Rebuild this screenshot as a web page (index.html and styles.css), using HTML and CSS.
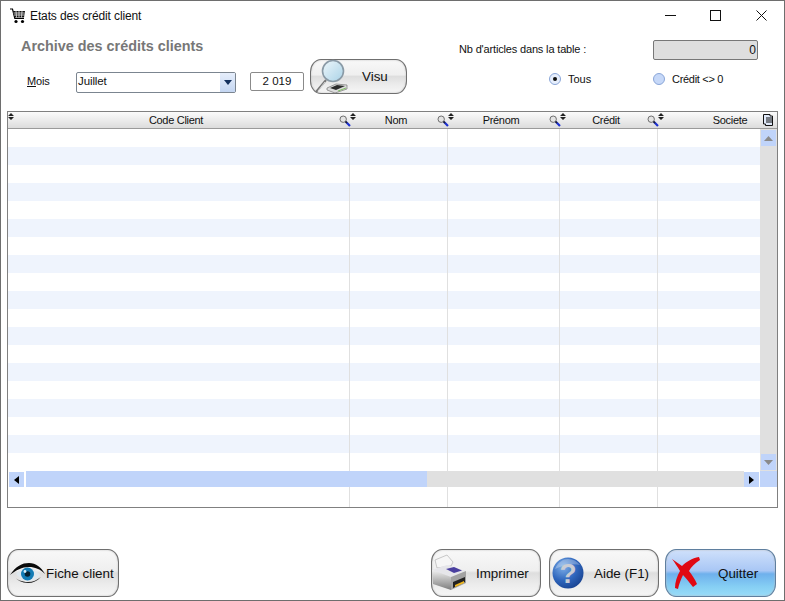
FILE: index.html
```html
<!DOCTYPE html>
<html lang="fr">
<head>
<meta charset="utf-8">
<title>Etats des crédit client</title>
<link rel="stylesheet" href="styles.css">
</head>
<body>
<svg class="defs" width="0" height="0" aria-hidden="true">
  <defs>
    <symbol id="sort" viewBox="0 0 6 7"><path d="M3 0 6 3H0Z M0 4H6L3 7Z" fill="#222"/></symbol>
    <symbol id="find" viewBox="0 0 12 12">
      <circle cx="4.2" cy="4.2" r="3.2" fill="#e4e4e4" stroke="#6e6e6e"/>
      <path d="M6.8 6.8 11 11" stroke="#1c2fd0" stroke-width="2.2"/>
      <path d="M6.5 6.5 8 8" stroke="#222" stroke-width="1.6"/>
    </symbol>
    <linearGradient id="lens" x1="0" y1="0" x2="1" y2="1"><stop offset="0" stop-color="#eef7fb"/><stop offset="1" stop-color="#a9d2e6"/></linearGradient>
    <radialGradient id="qball" cx=".35" cy=".3" r=".8"><stop offset="0" stop-color="#7fb0e8"/><stop offset=".55" stop-color="#2f66bd"/><stop offset="1" stop-color="#163f8c"/></radialGradient>
    <linearGradient id="printerbody" x1="0" y1="0" x2="0" y2="1"><stop offset="0" stop-color="#f0f0f0"/><stop offset="1" stop-color="#7d7d7d"/></linearGradient>
  </defs>
</svg>
<div class="window">
  <header class="titlebar">
    <svg class="cart" width="16" height="16" viewBox="0 0 16 16"><path d="M0 1h2.500l2.300 9.500H14" fill="none" stroke="#000" stroke-width="1.200"/><path d="M3 3h12l-1 6.500H4.500Z" fill="#111"/><path d="M3.500 5h11M4 7h10.500M6 3l.5 6.500M9 3v6.500M12 3l-.5 6.500" stroke="#fff" stroke-width=".7"/><circle cx="6" cy="13.500" r="1.600" fill="#000"/><circle cx="12.500" cy="13.500" r="1.600" fill="#000"/></svg>
    <span class="title">Etats des crédit client</span>
    <div class="controls">
      <span class="ctl"><svg width="11" height="11" viewBox="0 0 11 11"><path d="M0 5.500H11" stroke="#111"/></svg></span>
      <span class="ctl"><svg width="11" height="11" viewBox="0 0 11 11"><rect x=".5" y=".5" width="10" height="10" fill="none" stroke="#111"/></svg></span>
      <span class="ctl ctl-close"><svg width="11" height="11" viewBox="0 0 11 11"><path d="M.5.500 10.500 10.500M10.500.500 .5 10.500" stroke="#111"/></svg></span>
    </div>
  </header>

  <section class="top">
    <div class="top-left">
      <h1 class="heading">Archive des crédits clients</h1>
      <div class="filters">
        <label class="mois"><u>M</u>ois</label>
        <div class="select"><span class="select-value">Juillet</span><span class="select-btn"><svg width="8" height="5" viewBox="0 0 8 5"><path d="M0 0H8L4 5Z" fill="#14305e"/></svg></span></div>
        <div class="year">2 019</div>
        <button class="btn btn-visu" type="button">
          <svg width="46" height="36" viewBox="0 0 46 36"><path d="M13 21 3 33" stroke="#777" stroke-width="2"/><path d="M12 23 5 32" stroke="#eee" stroke-width=".8"/><circle cx="20" cy="12" r="10.500" fill="url(#lens)" stroke="#8a9aa6" stroke-width="1.600"/><path d="M14 29l9-4 11 1v4l-12 4-8-3Z" fill="#dcdcdc" stroke="#777" stroke-width=".7"/><path d="M17 29l7-3 8 1-9 4Z" fill="#2b2b2b"/><path d="M25 32l8-3" stroke="#7fbf60"/></svg>
          <span class="visu-label">Visu</span>
        </button>
      </div>
    </div>
    <div class="top-right">
      <div class="count-row">
        <span class="count-label">Nb d'articles dans la table :</span>
        <div class="count">0</div>
      </div>
      <div class="radios">
        <span class="radio radio-tous"><i class="dot on"></i>Tous</span>
        <span class="radio radio-credit"><i class="dot"></i>Crédit &lt;&gt; 0</span>
      </div>
    </div>
  </section>

  <section class="grid">
    <div class="head">
      <div class="hcell c1"><svg class="sort"><use href="#sort"/></svg><span class="hname">Code Client</span><svg class="find"><use href="#find"/></svg></div>
      <div class="hcell c2"><svg class="sort"><use href="#sort"/></svg><span class="hname">Nom</span><svg class="find"><use href="#find"/></svg></div>
      <div class="hcell c3"><svg class="sort"><use href="#sort"/></svg><span class="hname">Prénom</span><svg class="find"><use href="#find"/></svg></div>
      <div class="hcell c4"><svg class="sort"><use href="#sort"/></svg><span class="hname">Crédit</span><svg class="find"><use href="#find"/></svg></div>
      <div class="hcell c5"><svg class="sort"><use href="#sort"/></svg><span class="hname hname-last">Societe</span><svg class="cols" width="10" height="12" viewBox="0 0 10 12"><path d="M.5.500H7V2H9.500V11.500H2.500V10H.5Z" fill="#dfe8f8" stroke="#111"/><path d="M3 4H9M3 6H9M3 8H9" stroke="#111"/></svg></div>
    </div>
    <div class="body">
      <div class="rows" id="rows">
        <div class="row"><i class="c1"></i><i class="c2"></i><i class="c3"></i><i class="c4"></i><i class="c5"></i></div>
        <div class="row"><i class="c1"></i><i class="c2"></i><i class="c3"></i><i class="c4"></i><i class="c5"></i></div>
        <div class="row"><i class="c1"></i><i class="c2"></i><i class="c3"></i><i class="c4"></i><i class="c5"></i></div>
        <div class="row"><i class="c1"></i><i class="c2"></i><i class="c3"></i><i class="c4"></i><i class="c5"></i></div>
        <div class="row"><i class="c1"></i><i class="c2"></i><i class="c3"></i><i class="c4"></i><i class="c5"></i></div>
        <div class="row"><i class="c1"></i><i class="c2"></i><i class="c3"></i><i class="c4"></i><i class="c5"></i></div>
        <div class="row"><i class="c1"></i><i class="c2"></i><i class="c3"></i><i class="c4"></i><i class="c5"></i></div>
        <div class="row"><i class="c1"></i><i class="c2"></i><i class="c3"></i><i class="c4"></i><i class="c5"></i></div>
        <div class="row"><i class="c1"></i><i class="c2"></i><i class="c3"></i><i class="c4"></i><i class="c5"></i></div>
        <div class="row"><i class="c1"></i><i class="c2"></i><i class="c3"></i><i class="c4"></i><i class="c5"></i></div>
        <div class="row"><i class="c1"></i><i class="c2"></i><i class="c3"></i><i class="c4"></i><i class="c5"></i></div>
        <div class="row"><i class="c1"></i><i class="c2"></i><i class="c3"></i><i class="c4"></i><i class="c5"></i></div>
        <div class="row"><i class="c1"></i><i class="c2"></i><i class="c3"></i><i class="c4"></i><i class="c5"></i></div>
        <div class="row"><i class="c1"></i><i class="c2"></i><i class="c3"></i><i class="c4"></i><i class="c5"></i></div>
        <div class="row"><i class="c1"></i><i class="c2"></i><i class="c3"></i><i class="c4"></i><i class="c5"></i></div>
        <div class="row"><i class="c1"></i><i class="c2"></i><i class="c3"></i><i class="c4"></i><i class="c5"></i></div>
        <div class="row"><i class="c1"></i><i class="c2"></i><i class="c3"></i><i class="c4"></i><i class="c5"></i></div>
        <div class="row"><i class="c1"></i><i class="c2"></i><i class="c3"></i><i class="c4"></i><i class="c5"></i></div>
        <div class="row"><i class="c1"></i><i class="c2"></i><i class="c3"></i><i class="c4"></i><i class="c5"></i></div>
      </div>
      <div class="vscroll">
        <span class="sbtn"><svg width="9" height="5" viewBox="0 0 9 5"><path d="M4.500 0 9 5H0Z" fill="#8a8a8a"/></svg></span>
        <span class="vtrack"></span>
        <span class="sbtn"><svg width="9" height="5" viewBox="0 0 9 5"><path d="M0 0H9L4.500 5Z" fill="#8a8a8a"/></svg></span>
      </div>
    </div>
    <div class="hscroll">
      <span class="sbtn"><svg width="5" height="8" viewBox="0 0 5 8"><path d="M5 0V8L0 4Z" fill="#000"/></svg></span>
      <span class="hthumb"></span>
      <span class="htrack"></span>
      <span class="sbtn"><svg width="5" height="8" viewBox="0 0 5 8"><path d="M0 0V8L5 4Z" fill="#000"/></svg></span>
      <span class="corner"></span>
    </div>
    <div class="row row-foot"><i class="c1"></i><i class="c2"></i><i class="c3"></i><i class="c4"></i><i class="c5"></i></div>
  </section>

  <footer class="footer">
    <button class="btn btn-fiche" type="button">
      <svg width="35" height="22" viewBox="0 0 35 22"><path d="M0 13C6 4 12 1 19 1c7 0 12 4 16 11-5-5-10-7-16-7C12 5 6 8 0 13Z" fill="#0a0a0a"/><path d="M6 12c4-5 8-6 12-6 5 0 9 3 12 7-3 4-7 6-12 6-5 0-8-3-12-7Z" fill="#dfe8ee"/><circle cx="17.500" cy="12" r="6.500" fill="#127bb5"/><circle cx="17.500" cy="12" r="2.800" fill="#04202f"/><circle cx="15" cy="9.500" r="1.400" fill="#d8f0fb"/><path d="M2 13c5 5 10 7 16 7 5 0 9-2 13-5-4 4-8 6-13 6-6 0-11-3-16-8Z" fill="#222"/></svg>
      <span>Fiche client</span>
    </button>
    <button class="btn btn-print" type="button">
      <svg width="36" height="38" viewBox="0 0 36 38"><path d="M6 14 4 6 16 1l6 7-2 4Z" fill="#f6f6f6" stroke="#a8a8a8" stroke-width=".6"/><path d="M1 16 16 11l19 6-15 6Z" fill="#e6e6ea"/><path d="M15 15l8-2 8 3.500-8 2.500Z" fill="#4a3f9f"/><path d="M1 16 20 23V36L2 30Z" fill="url(#printerbody)"/><path d="M20 23 35 17V29L20 36Z" fill="#a2a2a2"/><path d="M22 28 34 23V28L22 34Z" fill="#222"/><path d="M24 31 33 27V29L24 33Z" fill="#f0b820"/></svg>
      <span>Imprimer</span>
    </button>
    <button class="btn btn-aide" type="button">
      <svg width="32" height="32" viewBox="0 0 32 32"><circle cx="16" cy="16" r="15.500" fill="url(#qball)"/><path d="M3 12C6 5 11 2 16 2c5 0 9 2 12 6-8-2-16 0-25 4Z" fill="#fff" opacity=".28"/><text class="qmark" x="16" y="26" text-anchor="middle">?</text></svg>
      <span>Aide (F1)</span>
    </button>
    <button class="btn btn-quit" type="button">
      <svg width="28" height="32" viewBox="0 0 28 32"><path d="M0 2 10 9C14 5 20 1 27 0l1 3C23 6 19 10 17 14c3 4 6 8 8 13l-4 3c-4-5-7-9-10-12C9 22 7 27 6 32L3 31c0-6 2-12 5-17C5 9 3 6 0 2Z" fill="#e00812"/></svg>
      <span>Quitter</span>
    </button>
  </footer>
</div>
</body>
</html>
```

FILE: styles.css
```css
* { box-sizing: border-box; }
html, body { margin: 0; padding: 0; }
body { width: 785px; height: 601px; overflow: hidden; background: #fff; font-family: "Liberation Sans", Arial, sans-serif; font-size: 11px; color: #111; }
.defs { display: block; height: 0; }
.window { width: 785px; height: 601px; border: 1px solid #6e6e6e; background: #fff; display: flex; flex-direction: column; }

.titlebar { height: 29px; display: flex; align-items: center; padding-left: 9px; flex: none; }
.cart { flex: none; }
.title { margin-left: 4px; font-size: 12px; letter-spacing: -.12px; }
.controls { margin-left: auto; display: flex; }
.ctl { width: 45px; height: 29px; display: flex; align-items: center; justify-content: center; }
.ctl-close { width: 46px; }

.top { height: 81px; flex: none; display: flex; justify-content: space-between; }
.top-left { padding-left: 20px; }
.heading { margin: 8px 0 0; font-size: 14.400px; line-height: 16px; font-weight: bold; color: #777; }
.filters { display: flex; align-items: flex-start; margin-top: 5px; }
.mois { width: 55px; margin-top: 15px; padding-left: 6px; line-height: 14px; letter-spacing: -.2px; }
.select { width: 160px; height: 21px; margin-top: 13px; border: 1px solid #7b8590; border-radius: 2px; display: flex; justify-content: space-between; background: #fff; }
.select-value { padding-left: 1px; line-height: 17px; font-size: 11.500px; letter-spacing: -.1px; }
.select-btn { width: 15px; background: linear-gradient(#e6eefb, #c4d6f2); display: flex; align-items: center; justify-content: center; }
.year { width: 54px; height: 19px; margin: 13px 0 0 14px; border: 1px solid #8a8a8a; border-radius: 2px; text-align: center; line-height: 17px; font-size: 11.500px; }

.btn { padding: 0; border: 1px solid #6f6f6f; border-radius: 11px / 13px; background: linear-gradient(#f8f8f8 0%, #efefef 45%, #dedede 50%, #ececec 75%, #f6f6f6 100%); display: flex; align-items: center; font-family: inherit; font-size: 13.400px; color: #111; box-shadow: inset 0 0 2px #bbb; }
.btn-visu { width: 97px; height: 35px; margin-left: 6px; padding-left: 2px; }
.btn-visu svg { flex: none; }
.visu-label { margin: -1px 0 0 3px; }

.top-right { width: 326px; flex: none; }
.count-row { display: flex; justify-content: space-between; align-items: center; padding: 10px 26px 0 1px; }
.count-label { margin-top: -2px; font-size: 11px; letter-spacing: -.16px; }
.count { width: 105px; height: 20px; border: 1px solid #777; border-radius: 2px; background: #dedede; text-align: right; padding-right: 1px; line-height: 18px; font-size: 12px; }
.radios { display: flex; margin-top: 12px; padding-left: 91px; }
.radio { display: flex; align-items: center; line-height: 14px; }
.radio-tous { width: 104px; }
.radio-credit { letter-spacing: -.3px; }
.dot { width: 12px; height: 12px; margin-right: 7px; border-radius: 50%; border: 1px solid #8aa6d8; background: #c6d8f8; display: flex; align-items: center; justify-content: center; }
.dot.on { background: #e6eefc; }
.dot.on::after { content: ""; width: 4px; height: 4px; border-radius: 50%; background: #111; }

.grid { width: 771px; height: 397px; margin-left: 6px; flex: none; border: 1px solid #808080; background: #fff; }
.c1 { width: 342px; flex: none; }
.c2 { width: 98px; flex: none; }
.c3 { width: 112px; flex: none; }
.c4 { width: 98px; flex: none; }
.c5 { width: 119px; flex: none; }
.head { display: flex; height: 17px; border-bottom: 1px solid #9a9a9a; background: linear-gradient(#fbfbfb, #ececec 50%, #dcdcdc); }
.hcell { position: relative; display: flex; align-items: center; justify-content: center; line-height: 15px; letter-spacing: -.3px; }
.sort { position: absolute; left: 0; top: 1px; width: 6px; height: 7px; }
.find { position: absolute; right: -1px; top: 3px; width: 12px; height: 12px; }
.hname { padding-right: 6px; }
.hname-last { padding: 0 0 0 25px; }
.cols { position: absolute; right: 4px; top: 2px; }
.body { display: flex; height: 342px; }
.rows { flex: 1; min-width: 0; overflow: hidden; }
.row { display: flex; height: 18px; }
.rows .row:nth-child(even) { background: #eff4fd; }
.row i { display: block; height: 100%; border-right: 1px solid #e0e0e0; }
.row .c5 { border-right: 0; }
.row-foot { height: 20px; }
.vscroll { width: 17px; flex: none; display: flex; flex-direction: column; align-items: center; background: #e0e0e0; }
.sbtn { width: 15px; height: 16px; flex: none; background: #c0d4fa; display: flex; align-items: center; justify-content: center; }
.vscroll .sbtn:first-child { margin-top: 1px; }
.vscroll .sbtn:last-child { margin-bottom: 1px; }
.vtrack { flex: 1; width: 100%; margin-top: 1px; }
.hscroll { display: flex; height: 16px; align-items: stretch; }
.hscroll .sbtn { height: 15px; margin-top: 1px; }
.hscroll .sbtn:first-child { margin-right: 2px; margin-left: 1px; width: 15px; }
.hthumb { width: 401px; background: #c0d4fa; }
.htrack { flex: 1; background: #e0e0e0; }
.corner { width: 17px; background: #c0d4fa; margin-left: 1px; }

.footer { flex: 1; display: flex; align-items: flex-end; padding: 0 8px 3px 6px; }
.footer .btn { height: 48px; }
.btn-fiche { width: 112px; padding-left: 2px; }
.btn-fiche span { margin-left: 1px; }
.btn-print { width: 110px; margin-left: auto; }
.btn-print svg { margin-left: -1px; }
.btn-print span { margin-left: 9px; }
.btn-aide { width: 110px; margin-left: 8px; padding-left: 2px; }
.btn-aide span { margin-left: 10px; }
.btn-quit { width: 111px; margin-left: 6px; padding-left: 6px; background: linear-gradient(#cfe0fb 0%, #a9c7f5 45%, #6eb0ec 52%, #86cff4 80%, #98dcf8 100%); border-color: #5f7f9f; }
.btn-quit span { margin-left: 18px; }
.qmark { font-family: "Liberation Sans", sans-serif; font-weight: bold; font-size: 28px; fill: #c9ccd4; }
```
